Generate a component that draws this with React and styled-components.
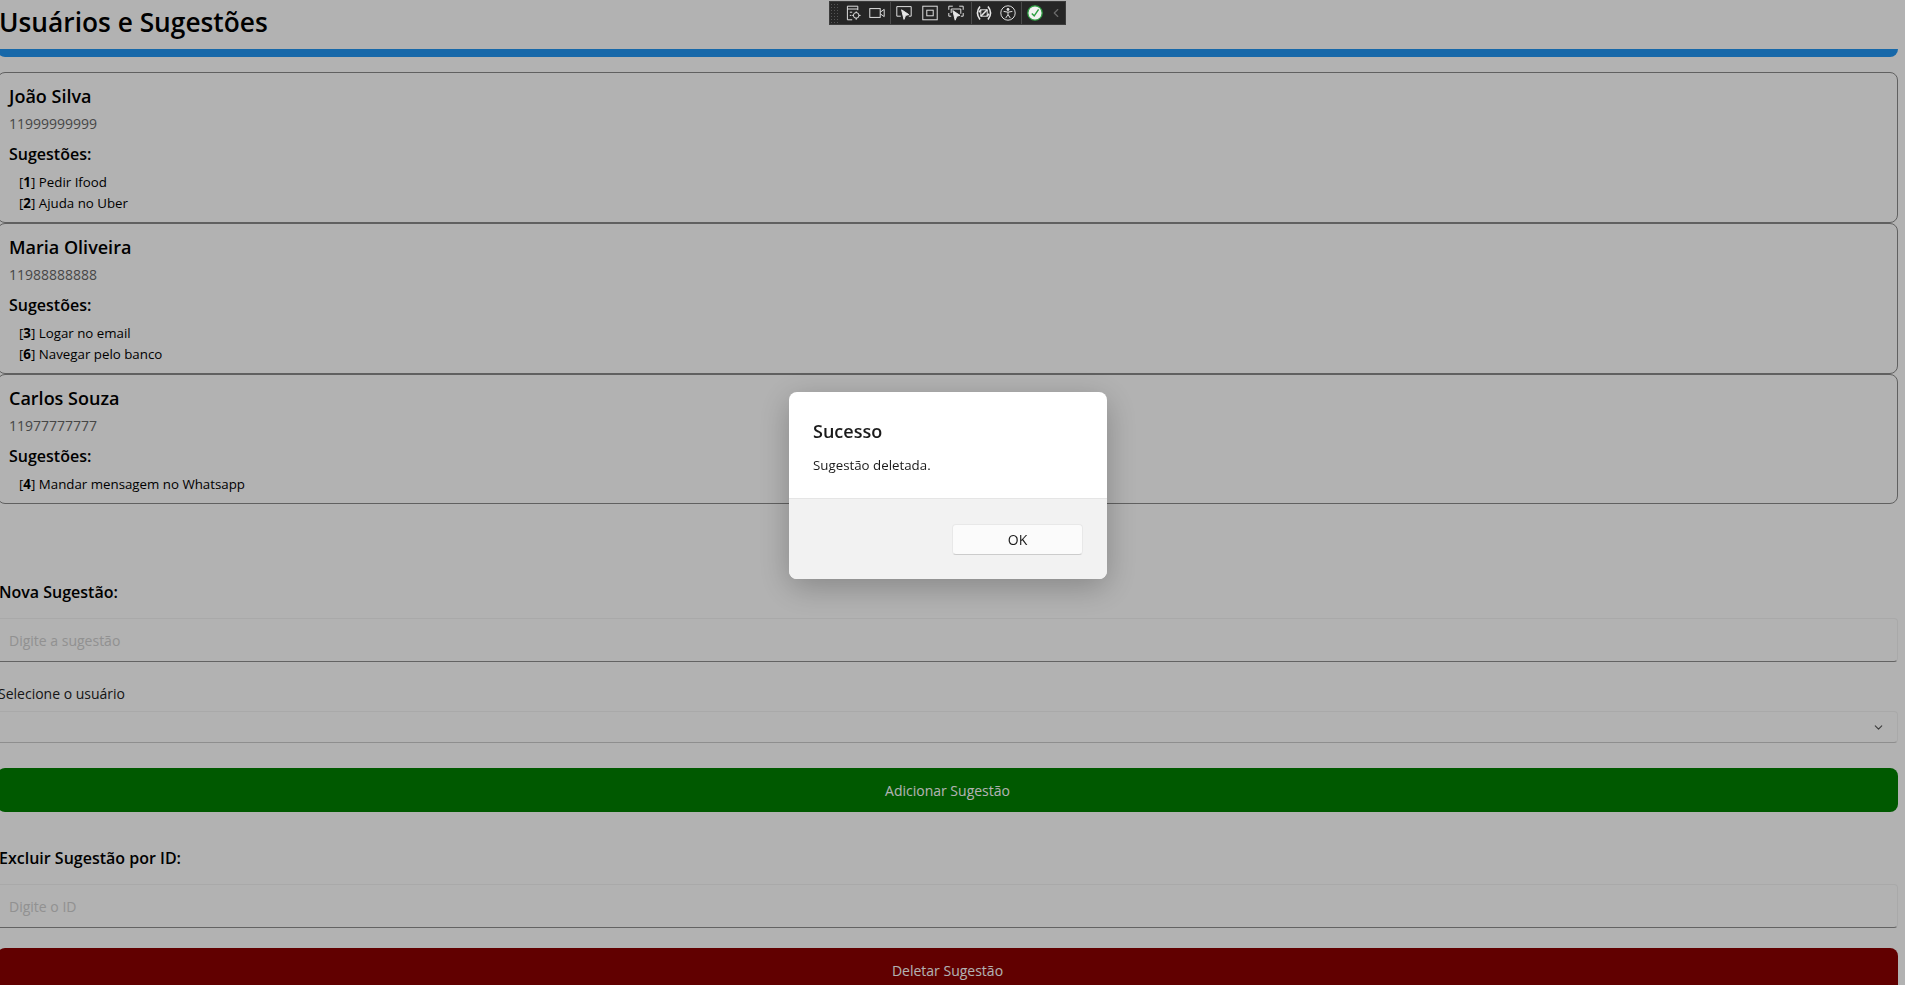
import React from 'react'
import styled, { createGlobalStyle } from 'styled-components'
import { ChevronDown, ChevronLeft } from 'lucide-react'

const GlobalStyle = createGlobalStyle`
  html, body {
    margin: 0;
    padding: 0;
    height: 100%;
    overflow: hidden;
    background: #fff;
    font-family: "Open Sans", "Noto Sans", sans-serif;
  }
  * { box-sizing: border-box; }
`

const users = [
  { name: 'João Silva', phone: '11999999999', items: [[1, 'Pedir Ifood'], [2, 'Ajuda no Uber']] },
  { name: 'Maria Oliveira', phone: '11988888888', items: [[3, 'Logar no email'], [6, 'Navegar pelo banco']] },
  { name: 'Carlos Souza', phone: '11977777777', items: [[4, 'Mandar mensagem no Whatsapp']] },
]

const Toolbar = () => (
  <ToolBar>
    <Grip />
    <ToolGroup $gap="8px" $left="6px" $right="5px">
      <ToolIcon viewBox="0 0 20 20">
        <path d="M3 1.5h13v5M3 1.5v17h6M3 5h13" />
        <circle cx="14" cy="13" r="3.5" />
        <path d="M14 8v2M14 16v2.5M9 13h2M17 13h2.5M6 9h3M6 13h2" />
      </ToolIcon>
      <ToolIcon viewBox="0 0 20 20">
        <rect x="1" y="4.5" width="13" height="11" />
        <path d="M14 9l5-3.5v9L14 11" />
      </ToolIcon>
    </ToolGroup>
    <ToolGroup $gap="10px" $left="5px" $right="7px">
      <ToolIcon viewBox="0 0 20 20">
        <path d="M6 14H1V2h18v12h-3" />
        <path d="M7 6l9 6-4 1-2 5z" fill="#e6e6e6" />
      </ToolIcon>
      <ToolIcon viewBox="0 0 20 20">
        <rect x="1" y="1.5" width="18" height="17" />
        <rect x="6" y="6.5" width="8" height="7" />
      </ToolIcon>
      <ToolIcon viewBox="0 0 20 20">
        <path d="M1 6V1.5h5M14 1.5h5V6M1 10v4h3M19 10v4h-3" />
        <path d="M4 5h12v6M4 5v5" />
        <path d="M6 7l9 6-4 1-2 5z" fill="#e6e6e6" />
      </ToolIcon>
    </ToolGroup>
    <ToolGroup $gap="8px" $left="4px" $right="5px">
      <ToolIcon viewBox="0 0 20 20">
        <path d="M5 2C1 7 1 13 5 18M15 2c4 5 4 11 0 16" strokeWidth="2" />
        <rect x="6" y="6" width="8" height="8" />
        <path d="M6 14l8-8M6 6l-2 3M14 14l2-3" strokeWidth="2" />
      </ToolIcon>
      <ToolIcon viewBox="0 0 20 20">
        <circle cx="10" cy="10" r="9" />
        <circle cx="10" cy="5.5" r="1.3" fill="#e6e6e6" />
        <path d="M4.5 8l5.5 1 5.5-1M10 9v3M10 12l-3 4.5M10 12l3 4.5" />
      </ToolIcon>
    </ToolGroup>
    <ToolGroup $gap="6px" $left="5px" $right="0" $last>
      <svg width="16" height="16" viewBox="0 0 20 20">
        <circle cx="10" cy="10" r="9" fill="#f2f2f2" stroke="#2ea043" strokeWidth="1.6" />
        <path d="M6 10.5l3 3 5.5-8" fill="none" stroke="#2ea043" strokeWidth="1.8" />
      </svg>
      <ChevronLeft size={14} color="#6b6b6b" />
    </ToolGroup>
  </ToolBar>
)

export default function App() {
  return (
    <Page>
      <GlobalStyle />
      <Title>Usuários e Sugestões</Title>
      <BlueBar />
      <List>
        {users.map((user) => (
          <Card key={user.name}>
            <Name>{user.name}</Name>
            <Phone>{user.phone}</Phone>
            <SubTitle>Sugestões:</SubTitle>
            {user.items.map(([id, text]) => (
              <Item key={id}>
                [<b>{id}</b>] {text}
              </Item>
            ))}
          </Card>
        ))}
      </List>

      <Label>Nova Sugestão:</Label>
      <Input placeholder="Digite a sugestão" />
      <SelectLabel>Selecione o usuário</SelectLabel>
      <SelectBox>
        <ChevronDown size={13} color="#555" />
      </SelectBox>
      <ActionButton $color="#008000">Adicionar Sugestão</ActionButton>

      <Label $delete>Excluir Sugestão por ID:</Label>
      <Input placeholder="Digite o ID" />
      <ActionButton $color="#8b0000" $delete>Deletar Sugestão</ActionButton>

      <Overlay>
        <Dialog>
          <DialogBody>
            <DialogTitle>Sucesso</DialogTitle>
            <DialogText>Sugestão deletada.</DialogText>
          </DialogBody>
          <DialogFooter>
            <OkButton>OK</OkButton>
          </DialogFooter>
        </Dialog>
      </Overlay>
      <Toolbar />
    </Page>
  )
}

const Page = styled.div`
  width: 1901px;
  height: 985px;
  margin-left: -3px;
  overflow: hidden;
  color: #000;
`

const Title = styled.h1`
  margin: 0;
  height: 49px;
  padding: 2px 0 0 2px;
  font-size: 26.3px;
  line-height: 40px;
  font-weight: 600;
`

const BlueBar = styled.div`
  height: 8px;
  background: #2196f3;
  border-radius: 0 0 8px 8px;
`

const List = styled.div`
  margin-top: 15px;
  display: flex;
  flex-direction: column;
`

const Card = styled.div`
  border: 1px solid #8a8a8a;
  border-radius: 8px;
  padding: 0 11px 8px;
`

const Name = styled.div`
  font-size: 18px;
  line-height: 24px;
  font-weight: 600;
  margin-top: 11px;
`

const Phone = styled.div`
  font-size: 14px;
  line-height: 19px;
  color: #666;
  margin-top: 6px;
`

const SubTitle = styled.div`
  font-size: 16px;
  line-height: 22px;
  font-weight: 600;
  margin-top: 10px;
  margin-bottom: 7px;
`

const Item = styled.div`
  font-size: 13.3px;
  line-height: 21px;
  padding-left: 10px;

  b {
    font-weight: 700;
  }
`

const Label = styled.div`
  font-size: 16px;
  line-height: 22px;
  font-weight: 600;
  padding-left: 2px;
  margin-top: ${(p) => (p.$delete ? '35px' : '77px')};
  margin-bottom: 15px;
`

const Input = styled.input`
  display: block;
  width: 100%;
  height: 44px;
  padding: 0 11px;
  font-family: inherit;
  font-size: 14px;
  background: #fff;
  border: 1px solid #f2f2f2;
  border-bottom: 1px solid #8f8f8f;
  border-radius: 4px;
  outline: none;

  &::placeholder {
    color: #d0d0d0;
  }
`

const SelectLabel = styled.div`
  font-size: 14px;
  line-height: 20px;
  padding-left: 1px;
  margin-top: 22px;
  margin-bottom: 7px;
  color: #222;
`

const SelectBox = styled.div`
  height: 32px;
  display: flex;
  align-items: center;
  justify-content: flex-end;
  padding-right: 12px;
  border: 1px solid #f2f2f2;
  border-bottom-color: #ccc;
  border-radius: 4px;
`

const ActionButton = styled.div`
  margin-top: ${(p) => (p.$delete ? '20px' : '25px')};
  height: 44px;
  display: flex;
  align-items: center;
  justify-content: center;
  background: ${(p) => p.$color};
  color: #fff;
  font-size: 14px;
  border-radius: 8px;
`

const Overlay = styled.div`
  position: fixed;
  inset: 0;
  background: rgba(0, 0, 0, 0.3);
`

const Dialog = styled.div`
  position: absolute;
  left: 789px;
  top: 392px;
  width: 318px;
  height: 187px;
  display: flex;
  flex-direction: column;
  background: #fff;
  border-radius: 8px;
  overflow: hidden;
  box-shadow: 0 8px 32px rgba(0, 0, 0, 0.25);
`

const DialogBody = styled.div`
  height: 107px;
  padding: 27px 24px 0;
  border-bottom: 1px solid #e5e5e5;
  color: #1a1a1a;
`

const DialogTitle = styled.div`
  font-size: 18px;
  line-height: 24px;
  font-weight: 600;
`

const DialogText = styled.div`
  font-size: 13.3px;
  line-height: 18px;
  margin-top: 13px;
`

const DialogFooter = styled.div`
  flex: 1;
  background: #f2f2f2;
  display: flex;
  justify-content: flex-end;
  padding: 25px 24px 0;
`

const OkButton = styled.div`
  width: 131px;
  height: 31px;
  display: flex;
  align-items: center;
  justify-content: center;
  background: #fbfbfb;
  border: 1px solid #e8e8e8;
  border-bottom-color: #ccc;
  border-radius: 4px;
  font-size: 14px;
  color: #1a1a1a;
`

const ToolBar = styled.div`
  position: fixed;
  left: 829px;
  top: 1px;
  width: 237px;
  height: 24px;
  display: flex;
  align-items: center;
  background: #262626;
  border: 1px solid #3c3c3c;
`

const Grip = styled.div`
  width: 9px;
  height: 20px;
  background-image: radial-gradient(#555 1px, transparent 1px);
  background-size: 3px 3px;
`

const ToolGroup = styled.div`
  display: flex;
  align-items: center;
  gap: ${(p) => p.$gap};
  height: 100%;
  padding: 0 ${(p) => p.$right} 0 ${(p) => p.$left};
  border-right: ${(p) => (p.$last ? 'none' : '1px solid #4a4a4a')};
`

const ToolIcon = styled.svg`
  width: 16px;
  height: 16px;
  fill: none;
  stroke: #e6e6e6;
  stroke-width: 1.2;
`
